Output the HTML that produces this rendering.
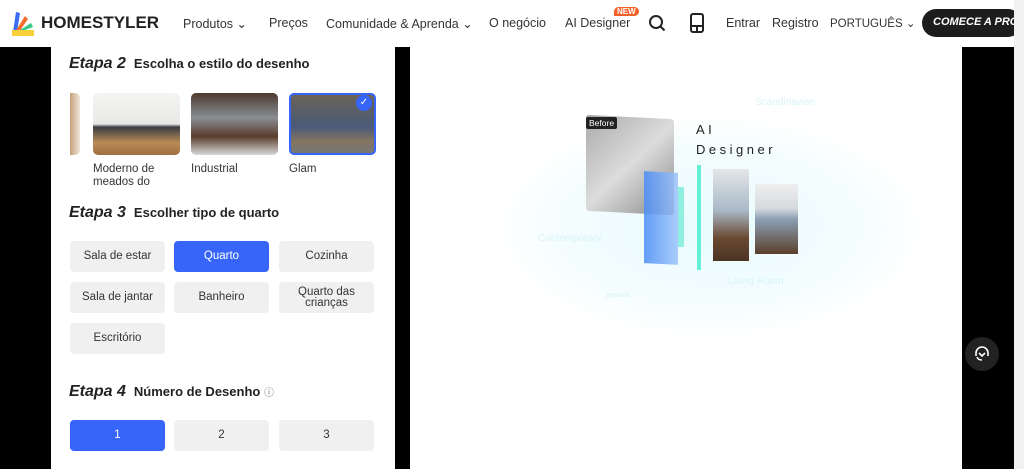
<!DOCTYPE html>
<html><head><meta charset="utf-8"><style>
*{box-sizing:border-box;margin:0;padding:0}
body{width:1024px;height:469px;overflow:hidden;background:#000;font-family:"Liberation Sans",sans-serif;position:relative;color:#222}
.hdr{position:absolute;left:0;top:0;width:1014px;height:47px;background:#fff}
.nav{position:absolute;top:16px;font-size:12.5px;color:#333;white-space:nowrap}
.panel{position:absolute;left:51px;top:47px;width:344px;height:422px;background:#fff}
.right{position:absolute;left:410px;top:47px;width:552px;height:422px;background:#fff}
.sb{position:absolute;left:1014px;top:0;width:10px;height:469px;background:#f1f1f1}
h3{position:absolute;left:18px;font-size:13px;font-weight:bold;color:#222}
h3 i{font-size:16px;margin-right:8px}
.btn{position:absolute;width:95px;height:31px;background:#f0f0f0;border-radius:4px;font-size:11.5px;color:#333;display:flex;align-items:center;justify-content:center;text-align:center;line-height:11px}
.on{background:#3765fa;color:#fff}
.img{position:absolute;top:46px;width:87px;height:62px;border-radius:5px}
.cap{position:absolute;top:116px;font-size:11.5px;color:#333;line-height:13px}
.lbl{position:absolute;font-size:10px;color:#d8f4f6}
</style></head><body>
<div class="hdr">
 <svg style="position:absolute;left:11px;top:10px" width="24" height="26" viewBox="0 0 24 26"><path d="M2 22 L5 2 L9 3 L6 22Z" fill="#3b6cf5"/><path d="M4 22 L14 6 L17 9 L8 22Z" fill="#f46b2a"/><path d="M6 22 L20 13 L22 17 L9 22Z" fill="#37c88a"/><rect x="1" y="20" width="22" height="6" fill="#f7d03a"/></svg>
 <div style="position:absolute;left:41px;top:13px;font-size:17px;font-weight:bold;color:#222">HOMESTYLER</div>
 <div class="nav" style="left:183px">Produtos ⌄</div>
 <div class="nav" style="left:269px">Preços</div>
 <div class="nav" style="left:326px">Comunidade &amp; Aprenda ⌄</div>
 <div class="nav" style="left:489px">O negócio</div>
 <div class="nav" style="left:565px">AI Designer</div>
 <div style="position:absolute;left:614px;top:7px;background:#f4622a;color:#fff;font-size:8px;font-weight:bold;padding:0 3px;border-radius:5px 5px 5px 0">NEW</div>
 <svg style="position:absolute;left:648px;top:14px" width="18" height="18" viewBox="0 0 18 18"><circle cx="8" cy="8" r="6" fill="none" stroke="#222" stroke-width="2"/><path d="M12.5 12.5L16.5 16.5" stroke="#222" stroke-width="2"/></svg>
 <svg style="position:absolute;left:690px;top:13px" width="14" height="20" viewBox="0 0 14 20"><rect x="1" y="1" width="12" height="18" rx="2" fill="none" stroke="#222" stroke-width="2"/><path d="M1 13H13M7 13V19" stroke="#222" stroke-width="2"/></svg>
 <div class="nav" style="left:726px">Entrar</div>
 <div class="nav" style="left:772px">Registro</div>
 <div class="nav" style="left:830px;font-size:11.5px">PORTUGUÊS ⌄</div>
 <div style="position:absolute;left:922px;top:9px;width:100px;height:28px;background:#1d1d1d;border-radius:14px;color:#fff;font-size:11px;font-weight:bold;font-style:italic;padding:7px 0 0 11px;white-space:nowrap;overflow:hidden">COMECE A PROJ</div>
</div>
<div class="sb"></div>
<div class="panel">
 <h3 style="top:8px"><i>Etapa 2</i>Escolha o estilo do desenho</h3>
 <div class="img" style="left:19px;width:10px;border-radius:0 5px 5px 0;background:linear-gradient(90deg,#c9a17a,#efe6da)"></div>
 <div class="img" style="left:42px;background:linear-gradient(180deg,#f4f4f2 0%,#e8e8e6 50%,#3a3d42 55%,#b98a56 80%,#9f6f3e)"></div>
 <div class="img" style="left:140px;background:linear-gradient(180deg,#4c3a2e,#8a8e94 40%,#5a3c2b 70%,#d8d8d8)"></div>
 <div class="img" style="left:238px;border:2px solid #3765fa;background:linear-gradient(180deg,#6b6357,#4b5a78 55%,#847661 80%,#777)"></div>
 <div style="position:absolute;left:305px;top:48px;width:16px;height:16px;border-radius:50%;background:#3765fa;color:#fff;font-size:10px;text-align:center;line-height:16px">✓</div>
 <div class="cap" style="left:42px">Moderno de<br>meados do</div>
 <div class="cap" style="left:140px">Industrial</div>
 <div class="cap" style="left:238px">Glam</div>
 <h3 style="top:157px"><i>Etapa 3</i>Escolher tipo de quarto</h3>
 <div class="btn" style="left:19px;top:194px">Sala de estar</div>
 <div class="btn on" style="left:123px;top:194px">Quarto</div>
 <div class="btn" style="left:228px;top:194px">Cozinha</div>
 <div class="btn" style="left:19px;top:235px">Sala de jantar</div>
 <div class="btn" style="left:123px;top:235px">Banheiro</div>
 <div class="btn" style="left:228px;top:235px">Quarto das<br>crianças</div>
 <div class="btn" style="left:19px;top:276px">Escritório</div>
 <h3 style="top:336px"><i>Etapa 4</i>Número de Desenho <span style="font-weight:normal;font-size:10px;color:#666">ⓘ</span></h3>
 <div class="btn on" style="left:19px;top:373px">1</div>
 <div class="btn" style="left:123px;top:373px">2</div>
 <div class="btn" style="left:228px;top:373px">3</div>
</div>
<div class="right">
 <div style="position:absolute;left:90px;top:70px;width:420px;height:220px;border-radius:50%;background:radial-gradient(ellipse at center,#e9fbfd 0%,#f4fdfe 50%,#fff 72%)"></div>
 <div class="lbl" style="left:345px;top:50px">Scandinavian</div>
 <div class="lbl" style="left:128px;top:186px">Contemporary</div>
 <div class="lbl" style="left:318px;top:229px">Living Room</div>
 <div class="lbl" style="left:195px;top:245px;font-size:7px">Japandi</div>
 <div style="position:absolute;left:176px;top:70px;width:88px;height:96px;border-radius:3px;background:linear-gradient(135deg,#aaa,#dcdcdc 50%,#888);transform:skewY(3deg)"></div>
 <div style="position:absolute;left:176px;top:70px;background:#222;color:#fff;font-size:8.5px;padding:1px 3px;border-radius:2px">Before</div>
 <div style="position:absolute;left:286px;top:73px;font-size:13px;letter-spacing:3.5px;color:#222;line-height:20px">AI<br>Designer</div>
 <div style="position:absolute;left:234px;top:125px;width:34px;height:92px;background:linear-gradient(90deg,#4a8cf5,#9ec4fb);opacity:.85;transform:skewY(3deg)"></div>
 <div style="position:absolute;left:268px;top:140px;width:6px;height:60px;background:#8ff0e2"></div>
 <div style="position:absolute;left:287px;top:118px;width:4px;height:105px;background:#64efd8"></div>
 <div style="position:absolute;left:345px;top:137px;width:43px;height:70px;background:linear-gradient(180deg,#eee,#d6dade 35%,#8ca0b4 50%,#5b3f2c)"></div>
 <div style="position:absolute;left:303px;top:122px;width:36px;height:92px;background:linear-gradient(180deg,#e4e6e8,#a9b8c8 45%,#6a4a32 75%,#4a3325)"></div>
</div>
<div style="position:absolute;left:965px;top:337px;width:34px;height:34px;border-radius:50%;background:#222"></div>
<svg style="position:absolute;left:972px;top:344px" width="20" height="20" viewBox="0 0 20 20"><path d="M4 12V9a6 6 0 0 1 12 0v3" fill="none" stroke="#fff" stroke-width="1.6"/><path d="M7 9l3 3 3-3" fill="none" stroke="#fff" stroke-width="1.6"/><path d="M5 13q1 3 5 3" fill="none" stroke="#fff" stroke-width="1.4"/></svg>
</body></html>
